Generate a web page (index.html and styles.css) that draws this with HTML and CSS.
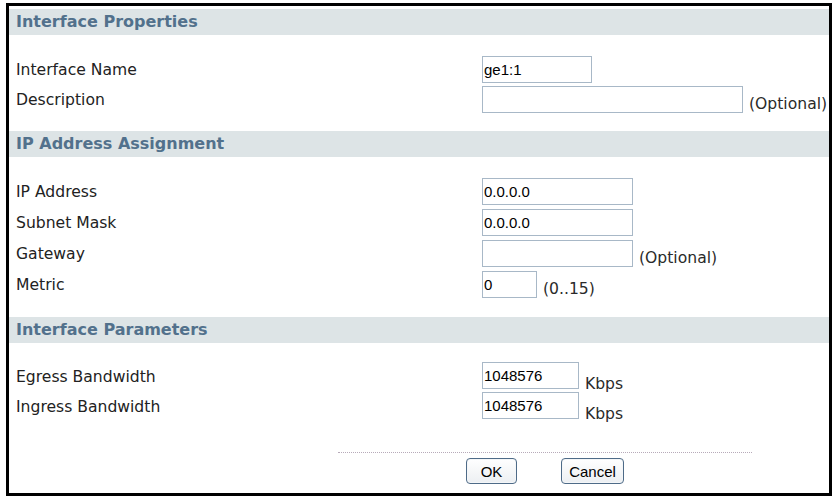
FILE: index.html
```html
<!DOCTYPE html>
<html>
<head>
<meta charset="utf-8">
<title>Interface</title>
<link rel="stylesheet" href="styles.css">
</head>
<body>
<div class="frame">
  <section class="section">
    <h2 class="band">Interface Properties</h2>
    <div class="body body-first">
      <div class="row">
        <span class="label">Interface Name</span>
        <input class="field w-name" type="text" value="ge1:1">
      </div>
      <div class="row">
        <span class="label">Description</span>
        <input class="field w-desc" type="text" value="">
        <span class="note">(Optional)</span>
      </div>
    </div>
  </section>

  <section class="section">
    <h2 class="band">IP Address Assignment</h2>
    <div class="body body-first rows-wide">
      <div class="row">
        <span class="label">IP Address</span>
        <input class="field w-ip" type="text" value="0.0.0.0">
      </div>
      <div class="row">
        <span class="label">Subnet Mask</span>
        <input class="field w-ip" type="text" value="0.0.0.0">
      </div>
      <div class="row">
        <span class="label">Gateway</span>
        <input class="field w-ip" type="text" value="">
        <span class="note">(Optional)</span>
      </div>
      <div class="row">
        <span class="label">Metric</span>
        <input class="field w-metric" type="text" value="0">
        <span class="note">(0..15)</span>
      </div>
    </div>
  </section>

  <section class="section">
    <h2 class="band">Interface Parameters</h2>
    <div class="body body-last">
      <div class="row">
        <span class="label label-low">Egress Bandwidth</span>
        <input class="field w-bw" type="text" value="1048576">
        <span class="note note-low">Kbps</span>
      </div>
      <div class="row">
        <span class="label label-low">Ingress Bandwidth</span>
        <input class="field w-bw" type="text" value="1048576">
        <span class="note note-low">Kbps</span>
      </div>
    </div>
  </section>

  <div class="footer">
    <div class="actions">
      <button class="btn btn-ok" type="button">OK</button>
      <button class="btn btn-cancel" type="button">Cancel</button>
    </div>
  </div>
</div>
</body>
</html>
```

FILE: styles.css
```css
html, body {
  margin: 0;
  padding: 0;
  background: #ffffff;
}

body {
  font-family: "DejaVu Sans", Verdana, sans-serif;
  color: #222222;
}

.frame {
  box-sizing: border-box;
  margin: 3px 0 0 6px;
  width: 826px;
  height: 493px;
  border: 3px solid #000000;
  padding-top: 3px;
  overflow: hidden;
  background: #ffffff;
}

.band {
  margin: 0;
  height: 26px;
  line-height: 26px;
  padding-left: 7px;
  background: #dde4e6;
  color: #52718c;
  font-size: 16px;
  font-weight: bold;
  white-space: nowrap;
}

.body {
  padding: 21px 0 15px 0;
}

.body-last {
  padding: 19px 0 0 0;
}

.row {
  display: flex;
  align-items: flex-start;
  height: 30px;
  white-space: nowrap;
}

.rows-wide .row {
  height: 31px;
}

.label {
  box-sizing: border-box;
  flex: 0 0 473px;
  padding-left: 7px;
  padding-top: 1px;
  height: 28px;
  line-height: 27px;
  font-size: 15.6px;
}

.label-low {
  padding-top: 2px;
}

.field {
  box-sizing: border-box;
  height: 27px;
  margin: 0;
  padding: 0 0 0 1px;
  border: 1px solid #a8b8c7;
  background: #ffffff;
  font-family: "Liberation Sans", Arial, sans-serif;
  font-size: 15px;
  color: #000000;
  outline: none;
}

.w-name { width: 110px; }
.w-desc { width: 261px; }
.w-ip { width: 151px; }
.w-metric { width: 55px; }
.w-bw { width: 97px; }

.note {
  margin-left: 6px;
  padding-top: 5px;
  line-height: 26px;
  font-size: 15.6px;
  color: #2a2a2a;
}

.note-low {
  padding-top: 9px;
}

.footer {
  margin: 30px 0 0 329px;
  width: 414px;
  border-top: 1px dotted #b7aab9;
  padding-top: 5px;
}

.actions {
  display: flex;
  justify-content: center;
  gap: 44px;
}

.btn {
  box-sizing: border-box;
  height: 26px;
  margin: 0;
  padding: 0;
  border: 1px solid #4e6b88;
  border-radius: 4px;
  background: linear-gradient(#ffffff, #eceff2);
  box-shadow: inset 0 0 0 1px #f4f6f8;
  font-family: "Liberation Sans", Arial, sans-serif;
  font-size: 15px;
  color: #000000;
}

.btn-ok { width: 51px; }
.btn-cancel { width: 63px; }
```
